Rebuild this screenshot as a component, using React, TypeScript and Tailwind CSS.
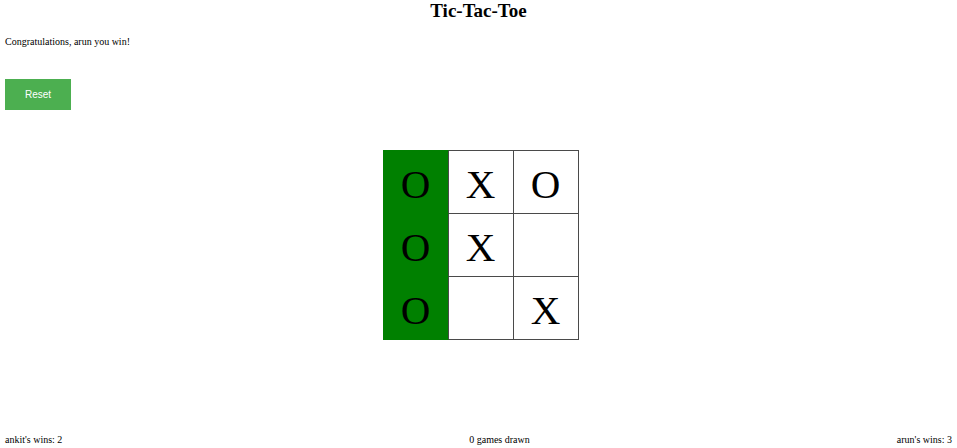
const board: string[] = ["O", "X", "O", "O", "X", "", "O", "", "X"];
const winning = [0, 3, 6];

const Cell = ({ value, index }: { value: string; index: number }) => {
  const row = Math.floor(index / 3);
  const col = index % 3;
  const won = winning.includes(index);
  const edges = [
    "border-r border-b",
    row === 0 ? "border-t" : "",
    col === 0 ? "border-l" : "",
    won ? "bg-[#008000] border-[#008000] border-r-[#4a4a4a]" : "bg-white border-[#4a4a4a]",
  ].join(" ");

  return (
    <div
      className={`flex items-center justify-center pt-[4px] text-[41px] leading-none text-black ${edges}`}
    >
      {value}
    </div>
  );
};

export default function App() {
  return (
    <div className="flex h-screen flex-col bg-white font-['Liberation_Serif','Times_New_Roman',serif] text-black">
      <h1 className="text-center text-[19px] font-bold leading-[22px]">
        Tic-Tac-Toe
      </h1>

      <p className="mt-[14px] px-[5px] text-[10px] leading-[12px]">
        Congratulations, arun you win!
      </p>

      <div className="mt-[31px] px-[5px]">
        <button
          type="button"
          className="h-[31px] w-[66px] bg-[#4caf50] font-['Liberation_Sans',Arial,sans-serif] text-[10px] text-white"
        >
          Reset
        </button>
      </div>

      <div className="mt-[40px] flex justify-center pl-[4px]">
        <div className="grid grid-cols-[66px_65px_65px] grid-rows-[64px_63px_63px]">
          {board.map((value, index) => (
            <Cell key={index} value={value} index={index} />
          ))}
        </div>
      </div>

      <div className="mt-auto grid grid-cols-3 px-[5px] pb-[2px] text-[10px] leading-[12px]">
        <span className="text-left">ankit's wins: 2</span>
        <span className="pl-[42px] text-center">0 games drawn</span>
        <span className="text-right">arun's wins: 3</span>
      </div>
    </div>
  );
}
